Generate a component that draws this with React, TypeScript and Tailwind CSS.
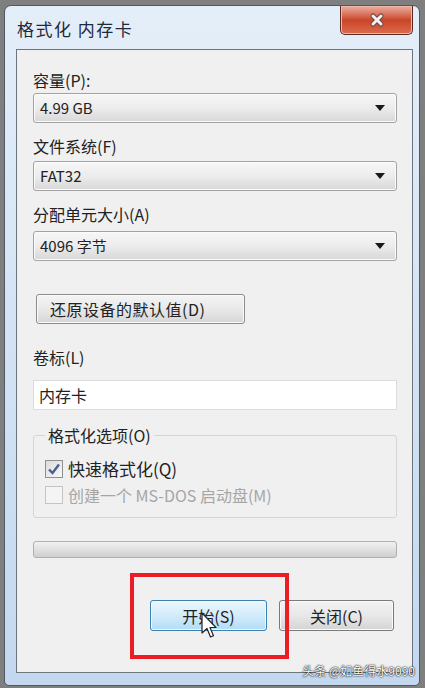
import React from "react";

function Combo({ value }: { value: string }) {
  return (
    <div className="flex h-[30px] items-center justify-between rounded-[3px] border border-[#a3a3a3] bg-linear-to-b from-[#f7f7f7] via-[#ececec] to-[#d8d8d8] pl-[6px] pr-[11px] shadow-[inset_0_0_0_1px_#fbfbfb]">
      <span className="text-[15px] text-[#222]">{value}</span>
      <svg width="10" height="6" viewBox="0 0 10 6">
        <path d="M0 0h10L5 6z" fill="#1a1a1a" />
      </svg>
    </div>
  );
}

function CheckBox({ checked, disabled }: { checked?: boolean; disabled?: boolean }) {
  return (
    <div
      className={
        disabled
          ? "flex h-[18px] w-[18px] items-center justify-center border border-[#c4c4c4] bg-[#f4f4f4]"
          : "flex h-[18px] w-[18px] items-center justify-center border border-[#8e8f8f] bg-linear-to-br from-[#dcdcdc] to-[#f8f8f8]"
      }
    >
      {checked && (
        <svg width="14" height="14" viewBox="0 0 14 14">
          <path d="M2 7.5 5.5 11 12 2.5" fill="none" stroke="#4b5f8c" strokeWidth="2.4" />
        </svg>
      )}
    </div>
  );
}

function CloseButton() {
  return (
    <div className="flex h-[29px] w-[73px] items-center justify-center rounded-b-[5px] border border-t-0 border-[#5b2a22] bg-linear-to-b from-[#eab0a2] via-[#c9452a] to-[#dc6a4c] shadow-[inset_0_0_0_1px_#f0b8a8]">
      <svg width="18" height="16" viewBox="0 0 18 16">
        <path d="M5 4 13 12M13 4 5 12" stroke="#6a4640" strokeWidth="5" strokeLinecap="round" />
        <path d="M5 4 13 12M13 4 5 12" stroke="#f4f0f0" strokeWidth="3" strokeLinecap="round" />
      </svg>
    </div>
  );
}

export default function App() {
  return (
    <div className="relative h-[688px] w-[425px] overflow-hidden bg-[#7f7f7f] pl-[4px] pt-[5px] font-['Noto_Sans_CJK_SC','Noto_Sans',sans-serif] text-[#222]">
      <div className="flex h-[681px] w-[416px] flex-col rounded-t-[7px] rounded-b-[5px] border border-[#4f5966] bg-linear-to-b from-[#e4eef9] via-[#d3e3f4] to-[#c3d8ef] pb-[12px] pl-[11px] pr-[6px]">
        {/* Title bar */}
        <div className="flex h-[43px] items-start justify-between">
          <span className="mt-[10px] pl-[1px] text-[17px] tracking-[1.5px] text-[#1c2a40]">格式化 内存卡</span>
          <CloseButton />
        </div>

        {/* Client area */}
        <div className="flex flex-1 flex-col border border-[#6c7480] bg-[#f0f0f0] pl-[16px] pr-[15px] text-[16px]">
          <div className="mt-[20px] h-[20px] leading-[20px]">容量(P):</div>
          <div className="mt-[3px]">
            <Combo value="4.99 GB" />
          </div>

          <div className="mt-[13px] h-[20px] leading-[20px]">文件系统(F)</div>
          <div className="mt-[5px]">
            <Combo value="FAT32" />
          </div>

          <div className="mt-[13px] h-[20px] leading-[20px]">分配单元大小(A)</div>
          <div className="mt-[7px]">
            <Combo value="4096 字节" />
          </div>

          <button className="ml-[3px] mt-[33px] flex h-[30px] w-[209px] items-center rounded-[3px] border border-[#8c8c8c] bg-linear-to-b from-[#f4f4f4] via-[#e9e9e9] to-[#d6d6d6] pl-[13px] text-[16px] tracking-[0.5px] text-[#222] shadow-[inset_0_0_0_1px_#fafafa]">
            还原设备的默认值(D)
          </button>

          <div className="mt-[23px] h-[20px] leading-[20px]">卷标(L)</div>
          <div className="mt-[13px] flex h-[30px] items-center border border-[#dcdcdc] bg-white pl-[5px] text-[16px]">
            内存卡
          </div>

          <fieldset className="mt-[15px] h-[93px] rounded-[3px] border border-[#d5d5d5] pl-[11px]">
            <legend className="px-[3px] text-[16px] leading-[20px]">格式化选项(O)</legend>
            <div className="mt-[14px] flex h-[20px] items-center gap-[5px]">
              <CheckBox checked />
              <span className="text-[17px] leading-[20px]">快速格式化(Q)</span>
            </div>
            <div className="mt-[6px] flex h-[20px] items-center gap-[5px]">
              <CheckBox disabled />
              <span className="text-[16px] leading-[20px] text-[#a6a6a6]">创建一个 MS-DOS 启动盘(M)</span>
            </div>
          </fieldset>

          <div className="mt-[23px] h-[17px] rounded-[3px] border border-[#b0b0b0] bg-linear-to-b from-[#f2f2f2] via-[#e0e0e0] to-[#cfcfcf]" />

          <div className="mt-[42px] flex justify-end gap-[12px] pr-[3px]">
            <button className="flex h-[31px] w-[117px] items-center justify-center rounded-[3px] border border-[#3c7fb1] bg-linear-to-b from-[#eaf6fd] via-[#d3ecfb] to-[#b1dcf6] text-[16px] text-[#222] shadow-[inset_0_0_0_1px_#f2fafe]">
              开始(S)
            </button>
            <button className="flex h-[31px] w-[115px] items-center justify-center rounded-[3px] border border-[#7a7a7a] bg-linear-to-b from-[#f3f3f3] via-[#e8e8e8] to-[#d4d4d4] text-[16px] text-[#222] shadow-[inset_0_0_0_1px_#fafafa]">
              关闭(C)
            </button>
          </div>
        </div>
      </div>

      {/* Red highlight box */}
      <div className="absolute left-[130px] top-[573px] h-[86px] w-[159px] border-[4px] border-[#ec1c24]" />

      {/* Mouse cursor */}
      <svg className="absolute left-[201px] top-[612px]" width="16" height="28" viewBox="0 0 16 28">
        <path d="M1 1 1 21 6 16.5 9.5 25 12.5 23.7 9 15.5 15 15.5Z" fill="#fff" stroke="#222" strokeWidth="1.2" strokeLinejoin="round" />
      </svg>

      {/* Watermark */}
      <div className="absolute right-[10px] top-[662px] text-[12px] leading-[18px] text-white [text-shadow:0_0_2px_#000,0_0_1px_#000]">
        头条 @如鱼得水9090
      </div>
    </div>
  );
}
